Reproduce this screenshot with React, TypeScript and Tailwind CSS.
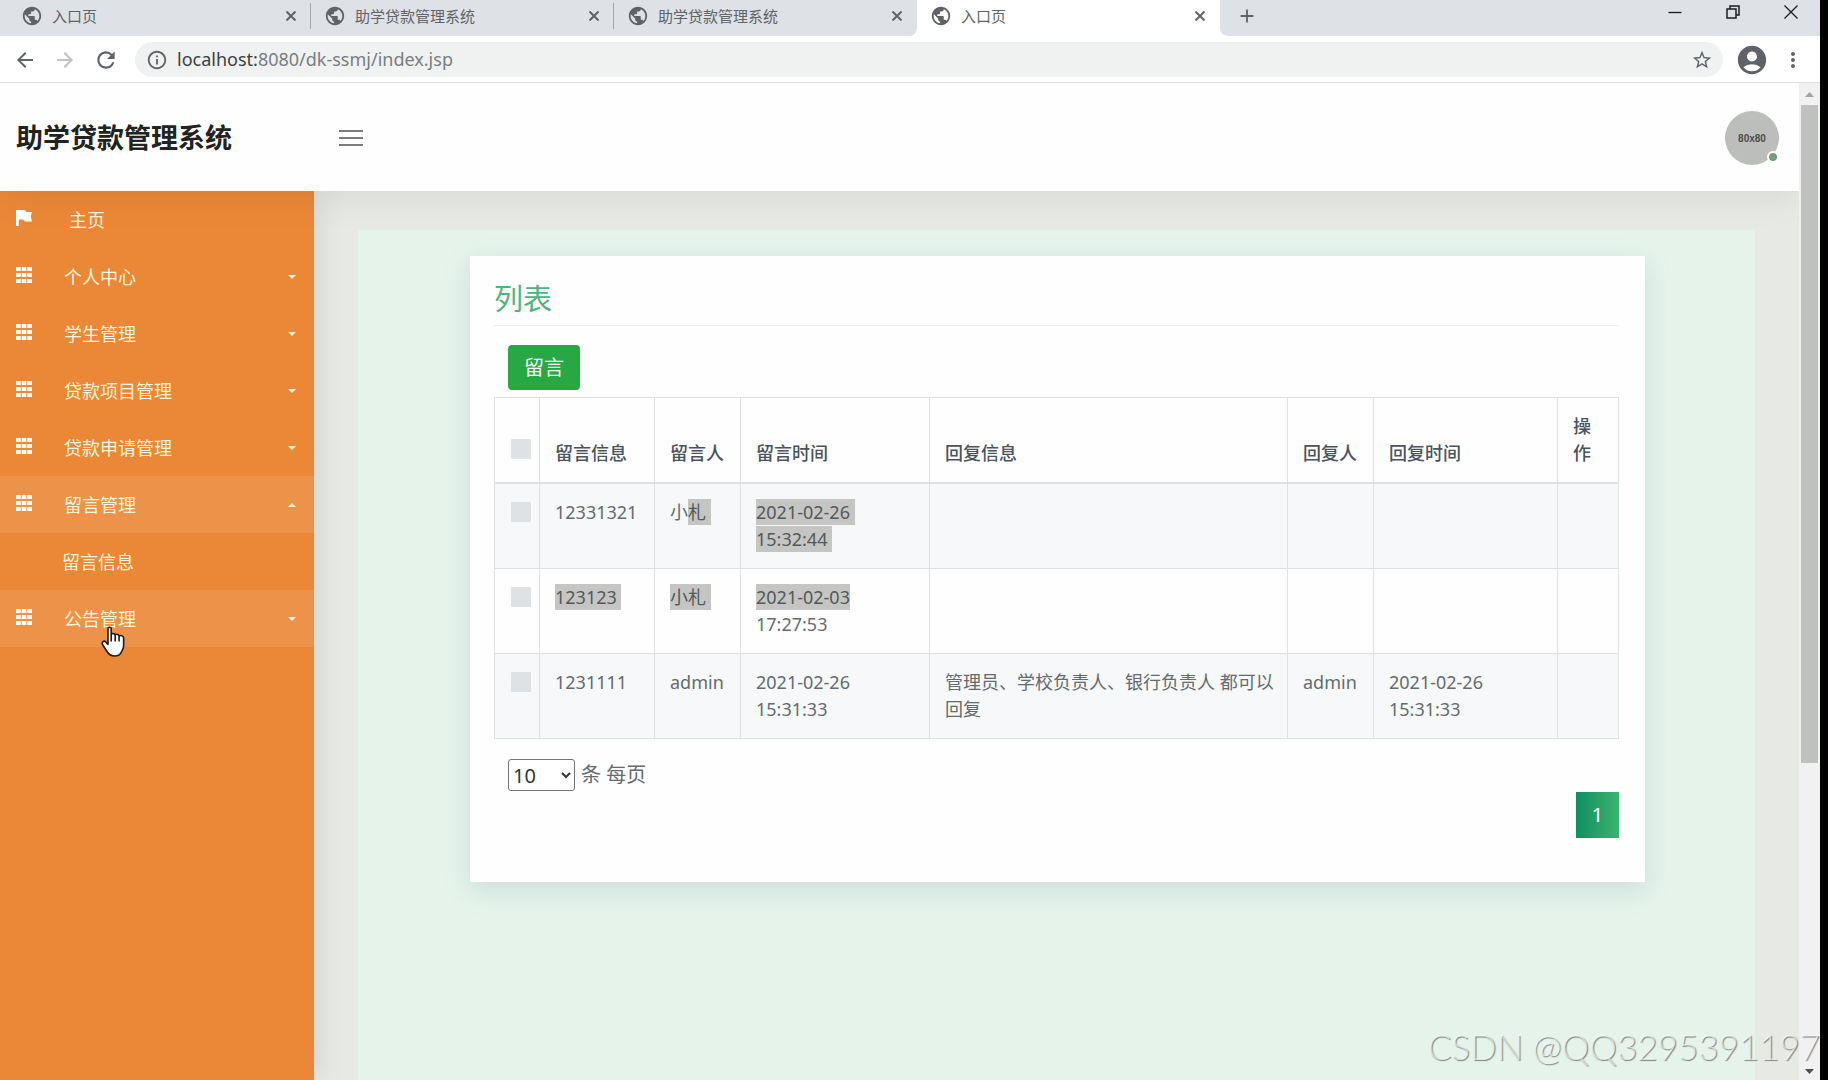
import React from 'react';
import clsx from 'clsx';
import {
  MdAccountCircle,
  MdAdd,
  MdArrowBack,
  MdArrowForward,
  MdInfoOutline,
  MdMoreVert,
  MdPublic,
  MdRefresh,
  MdStarBorder
} from 'react-icons/md';

const tabs = [
  { title: '入口页', active: false },
  { title: '助学贷款管理系统', active: false },
  { title: '助学贷款管理系统', active: false },
  { title: '入口页', active: true }
];

const menu = [
  { title: '个人中心' },
  { title: '学生管理' },
  { title: '贷款项目管理' },
  { title: '贷款申请管理' },
  { title: '留言管理', open: true, children: ['留言信息'] },
  { title: '公告管理', hover: true }
];

const columns = ['留言信息', '留言人', '留言时间', '回复信息', '回复人', '回复时间', '操作'];

const Mark = ({ children }: { children: React.ReactNode }) => (
  <mark className="bg-[#c5c6c4] py-px text-[#53585a]">{children}</mark>
);

const rows = [
  {
    id: 1,
    cells: [
      '12331321',
      <>小<Mark>札&nbsp;</Mark></>,
      <><Mark>2021-02-26&nbsp;</Mark><br /><Mark>15:32:44&nbsp;</Mark></>,
      '', '', '', ''
    ]
  },
  {
    id: 2,
    cells: [
      <Mark>123123&nbsp;</Mark>,
      <Mark>小札&nbsp;</Mark>,
      <><Mark>2021-02-03</Mark><br />17:27:53</>,
      '', '', '', ''
    ]
  },
  {
    id: 3,
    cells: [
      '1231111',
      'admin',
      <>2021-02-26<br />15:31:33</>,
      '管理员、学校负责人、银行负责人 都可以回复',
      'admin',
      <>2021-02-26<br />15:31:33</>,
      ''
    ]
  }
];

const FlagIcon = () => (
  <svg className="h-4 w-4 fill-white" viewBox="0 0 16 16" aria-hidden="true">
    <path d="M0 0H8.500L10.500 2H16L14.800 6.500L16 11.500H9L7 9.500H2.800V16H0Z" />
  </svg>
);

const GridIcon = () => (
  <svg className="h-4 w-4 fill-[#fffaf0]" viewBox="0 0 16 16" aria-hidden="true">
    {[0, 6, 12].map((y) =>
      [0, 5.6, 11.2].map((x) => <rect key={`${x}-${y}`} x={x} y={y} width="4.8" height="4" />)
    )}
  </svg>
);

const Caret = ({ up }: { up?: boolean }) => (
  <svg className="mr-[18px] h-1 w-2 fill-current" viewBox="0 0 8 4" aria-hidden="true">
    <path d={up ? 'M0 4L4 0L8 4Z' : 'M0 0L4 4L8 0Z'} />
  </svg>
);

const HandCursor = () => (
  <svg
    className="pointer-events-none absolute top-[36px] left-[101px] z-10 h-[31px] w-[24px]"
    viewBox="0 0 24 31"
    fill="#fff"
    stroke="#1d1d1f"
    strokeWidth="1.6"
    strokeLinejoin="round"
    aria-hidden="true"
  >
    <path d="M7 2.600C7 .8 10.200 .8 10.200 2.600V8.500C11 7 14 7.400 14.200 9C15.200 7.800 18 8.300 18.100 10C19.400 9 22.600 9.500 22.600 12V20C22.600 23 21 24.500 20.400 26C19 29.300 16.500 30 13.500 30C9.500 30 7.500 28 6 25.500L1.500 18.500C.3 16 3 14 4.800 16L7 18.500Z" />
    <path d="M10.200 8.500V15.500M14.200 9V15.500M18.100 10V15.500" fill="none" />
  </svg>
);

const BrowserBar = () => (
  <header className="shrink-0">
    {/* Tab strip */}
    <div className="flex h-9 bg-white text-[#5f6367]">
      <div className="w-2 bg-[#dee1e5]" />
      {tabs.map((tab, i) => (
        <div
          key={i}
          className={clsx(
            'flex w-[303px] shrink-0 items-center pb-[5px] pl-[13px]',
            !tab.active && 'bg-[#dee1e5]',
            tabs[i + 1]?.active && 'rounded-br-lg'
          )}
        >
          <MdPublic className="h-[22px] w-[22px]" />
          <span className="ml-[9px] flex-1 truncate text-[15px] leading-5">{tab.title}</span>
          <button aria-label="关闭标签页" className="mr-[14px]">
            <svg className="h-[10px] w-[10px]" viewBox="0 0 10 10" stroke="currentColor" strokeWidth="2">
              <path d="M.5.5L9.500 9.500M9.500.5L.5 9.500" />
            </svg>
          </button>
          <span className={clsx('h-[26px] w-px', i < 2 && 'bg-[#a3a6aa]')} />
        </div>
      ))}
      <div className="flex flex-1 items-start justify-between rounded-bl-lg bg-[#dee1e5]">
        <button aria-label="新标签页" className="flex h-[31px] items-center pl-4">
          <MdAdd className="h-[22px] w-[22px]" />
        </button>
        <div className="flex h-6 items-center gap-11 pr-[22px] text-[#1c1c1e]">
          <button aria-label="最小化">
            <svg className="h-[14px] w-[14px]" viewBox="0 0 14 14" stroke="currentColor" strokeWidth="1.300">
              <path d="M.5 7.500H13.500" />
            </svg>
          </button>
          <button aria-label="还原">
            <svg className="h-[14px] w-[14px]" viewBox="0 0 14 14" fill="none" stroke="currentColor" strokeWidth="1.500">
              <path d="M1 4H10V13H1ZM4 4V1H13V10H10" />
            </svg>
          </button>
          <button aria-label="关闭">
            <svg className="h-[14px] w-[14px]" viewBox="0 0 14 14" stroke="currentColor" strokeWidth="1.300">
              <path d="M.5.5L13.500 13.500M13.500.5L.5 13.500" />
            </svg>
          </button>
        </div>
      </div>
    </div>

    {/* Address bar */}
    <div className="flex h-[47px] items-center border-b border-[#dfe1e1] bg-white pt-px pl-[13px] text-[#5f6367]">
      <button aria-label="后退"><MdArrowBack className="h-6 w-6" /></button>
      <button aria-label="前进" className="ml-4 text-[#c0c2c3]"><MdArrowForward className="h-6 w-6" /></button>
      <button aria-label="刷新" className="ml-4"><MdRefresh className="h-[26px] w-[26px]" /></button>
      <div className="ml-4 flex h-[35px] flex-1 items-center rounded-full bg-[#f0f2f2] pr-[10px] pl-[11px]">
        <MdInfoOutline className="h-[22px] w-[22px]" />
        <div className="ml-[9px] flex-1 pb-px text-[18px] leading-6 text-[#7a7d80]">
          <span className="text-[#3c4043]">localhost:</span>8080/dk-ssmj/index.jsp
        </div>
        <button aria-label="收藏"><MdStarBorder className="h-[22px] w-[22px]" /></button>
      </div>
      <button aria-label="用户" className="ml-3"><MdAccountCircle className="h-[34px] w-[34px]" /></button>
      <button aria-label="菜单" className="mr-[15px] ml-3"><MdMoreVert className="h-6 w-6" /></button>
    </div>
  </header>
);

const TopNav = () => (
  <div className="relative z-10 flex h-[108px] shrink-0 items-center bg-[#fefefe] pt-[2px] shadow-[0_0_40px_rgba(0,0,0,0.1)]">
    <h1 className="w-[339px] pl-4 text-[27px] leading-9 font-bold text-[#212321]">助学贷款管理系统</h1>
    <button aria-label="切换菜单" className="flex w-6 flex-col gap-[5px]">
      <span className="h-[2px] bg-[#7c7c7c]" />
      <span className="h-[2px] bg-[#7c7c7c]" />
      <span className="h-[2px] bg-[#7c7c7c]" />
    </button>
    <div className="relative mr-5 ml-auto flex h-[54px] w-[54px] items-center justify-center rounded-full bg-[#bcbebc] font-['Liberation_Sans',sans-serif] text-[10px] font-semibold text-[#4a4c4a]">
      80x80
      <span className="absolute right-0 bottom-[2px] h-3 w-3 rounded-full border-2 border-white bg-[#779d78]" />
    </div>
  </div>
);

const Sidebar = () => (
  <nav className="w-[314px] shrink-0 bg-[#eb8838] text-[18px] leading-6 text-[#fff5dc] shadow-[0_0_30px_rgba(0,0,0,0.12)]">
    <ul>
      <li>
        <a href="#home" className="flex h-[57px] items-center pl-4">
          <span className="pb-1"><FlagIcon /></span>
          <span className="ml-[37px]">主页</span>
        </a>
      </li>
      {menu.map((item) => (
        <li key={item.title} className="relative">
          <a
            href="#menu"
            className={clsx(
              'flex h-[57px] items-center pl-4',
              (item.open || item.hover) && 'bg-[#ed9349]'
            )}
          >
            <span className="pb-[3px]"><GridIcon /></span>
            <span className="ml-8 flex-1">{item.title}</span>
            <Caret up={item.open} />
          </a>
          {item.children?.map((child) => (
            <a key={child} href="#sub" className="flex h-[57px] items-center pl-[62px]">
              {child}
            </a>
          ))}
          {item.hover && <HandCursor />}
        </li>
      ))}
    </ul>
  </nav>
);

const MessageTable = () => (
  <table className="w-full table-fixed border-collapse border border-[#dee2e2] text-[18px] leading-[27px] text-[#646b70]">
    <colgroup>
      <col className="w-[45px]" />
      <col className="w-[115px]" />
      <col className="w-[86px]" />
      <col className="w-[189px]" />
      <col />
      <col className="w-[86px]" />
      <col className="w-[184px]" />
      <col className="w-[61px]" />
    </colgroup>
    <thead>
      <tr className="border-b-2 border-[#dee2e2] text-left align-bottom text-[#49545e]">
        <th className="py-[15px] pl-4">
          <input
            type="checkbox"
            aria-label="全选"
            className="mb-2 block h-5 w-5 appearance-none rounded-[1px] bg-[#dee2e5]"
          />
        </th>
        {columns.map((name) => (
          <th key={name} className="border-l border-[#dee2e2] px-[15px] py-[15px] font-medium">
            {name}
          </th>
        ))}
      </tr>
    </thead>
    <tbody>
      {rows.map((row) => (
        <tr key={row.id} className="h-[85px] border-b border-[#dee2e2] align-top odd:bg-[#f7f8f9]">
          <td className="py-[18px] pl-4">
            <input
              type="checkbox"
              aria-label={`选择第 ${row.id} 条`}
              className="block h-5 w-5 appearance-none rounded-[1px] bg-[#dee2e5]"
            />
          </td>
          {row.cells.map((cell, i) => (
            <td key={i} className="border-l border-[#dee2e2] py-[15px] pr-3 pl-[15px]">
              {cell}
            </td>
          ))}
        </tr>
      ))}
    </tbody>
  </table>
);

const MessageCard = () => (
  <section className="bg-[#fefefe] pt-[25px] pr-[26px] pb-11 pl-6 shadow-[0_8px_24px_rgba(120,150,170,0.22)]">
    <h2 className="border-b border-[#eff1f0] pb-2 text-[29px] leading-9 text-[#51b37c]">列表</h2>
    <div className="px-[14px] pt-[19px] pb-[7px]">
      <button className="h-[45px] rounded bg-[#28a745] px-4 text-[20px] leading-6 text-[#f2fbf3]">留言</button>
    </div>
    <MessageTable />
    <div className="flex items-center gap-[6px] px-[14px] pt-5 text-[20px] leading-8 text-[#646b70]">
      <select
        id="page-size"
        defaultValue="10"
        className="h-8 w-[67px] rounded-[3px] border border-[#767676] bg-white text-[#333]"
      >
        <option>10</option>
        <option>25</option>
        <option>50</option>
      </select>
      <label htmlFor="page-size">条 每页</label>
    </div>
    <div className="flex justify-end pt-px">
      <button className="h-[46px] w-[43px] bg-linear-to-r from-[#0d8f62] to-[#3bb370] text-[20px] text-white">1</button>
    </div>
  </section>
);

const Scrollbar = () => (
  <div className="flex w-[21px] shrink-0 flex-col items-center bg-[#f0f1f0] pt-[9px] pb-[6px]">
    <svg className="h-[5px] w-[9px] fill-[#a3a3a3]" viewBox="0 0 9 5"><path d="M0 5L4.500 0L9 5Z" /></svg>
    <div className="mt-2 h-[67%] w-[17px] bg-[#bfc1bf]" />
    <svg className="mt-auto h-[5px] w-[9px] fill-[#505050]" viewBox="0 0 9 5"><path d="M0 0L4.500 5L9 0Z" /></svg>
  </div>
);

const App = () => {
  return (
    <div className="relative flex h-screen flex-col overflow-hidden border-r-8 border-black bg-white font-['Noto_Sans','Noto_Sans_CJK_SC',sans-serif]">
      <BrowserBar />
      <div className="flex min-h-0 flex-1">
        <div className="flex min-w-0 flex-1 flex-col overflow-hidden">
          <TopNav />
          <div className="flex flex-1 bg-[#e7e9e5]">
            <Sidebar />
            <main className="min-w-0 flex-1 px-[44px] pt-[39px]">
              <div className="h-full bg-[#e5f3eb] pt-[26px] pr-[110px] pl-[112px]">
                <MessageCard />
              </div>
            </main>
          </div>
        </div>
        <Scrollbar />
      </div>

      {/* Watermark */}
      <div className="pointer-events-none absolute right-0 bottom-[10px] z-20 font-['Lato',sans-serif] text-[35px] leading-12 font-light whitespace-nowrap text-white/60 [text-shadow:1px_1px_1px_rgba(0,0,0,0.45)]">
        CSDN @QQ3295391197
      </div>
    </div>
  );
};

export default App;
